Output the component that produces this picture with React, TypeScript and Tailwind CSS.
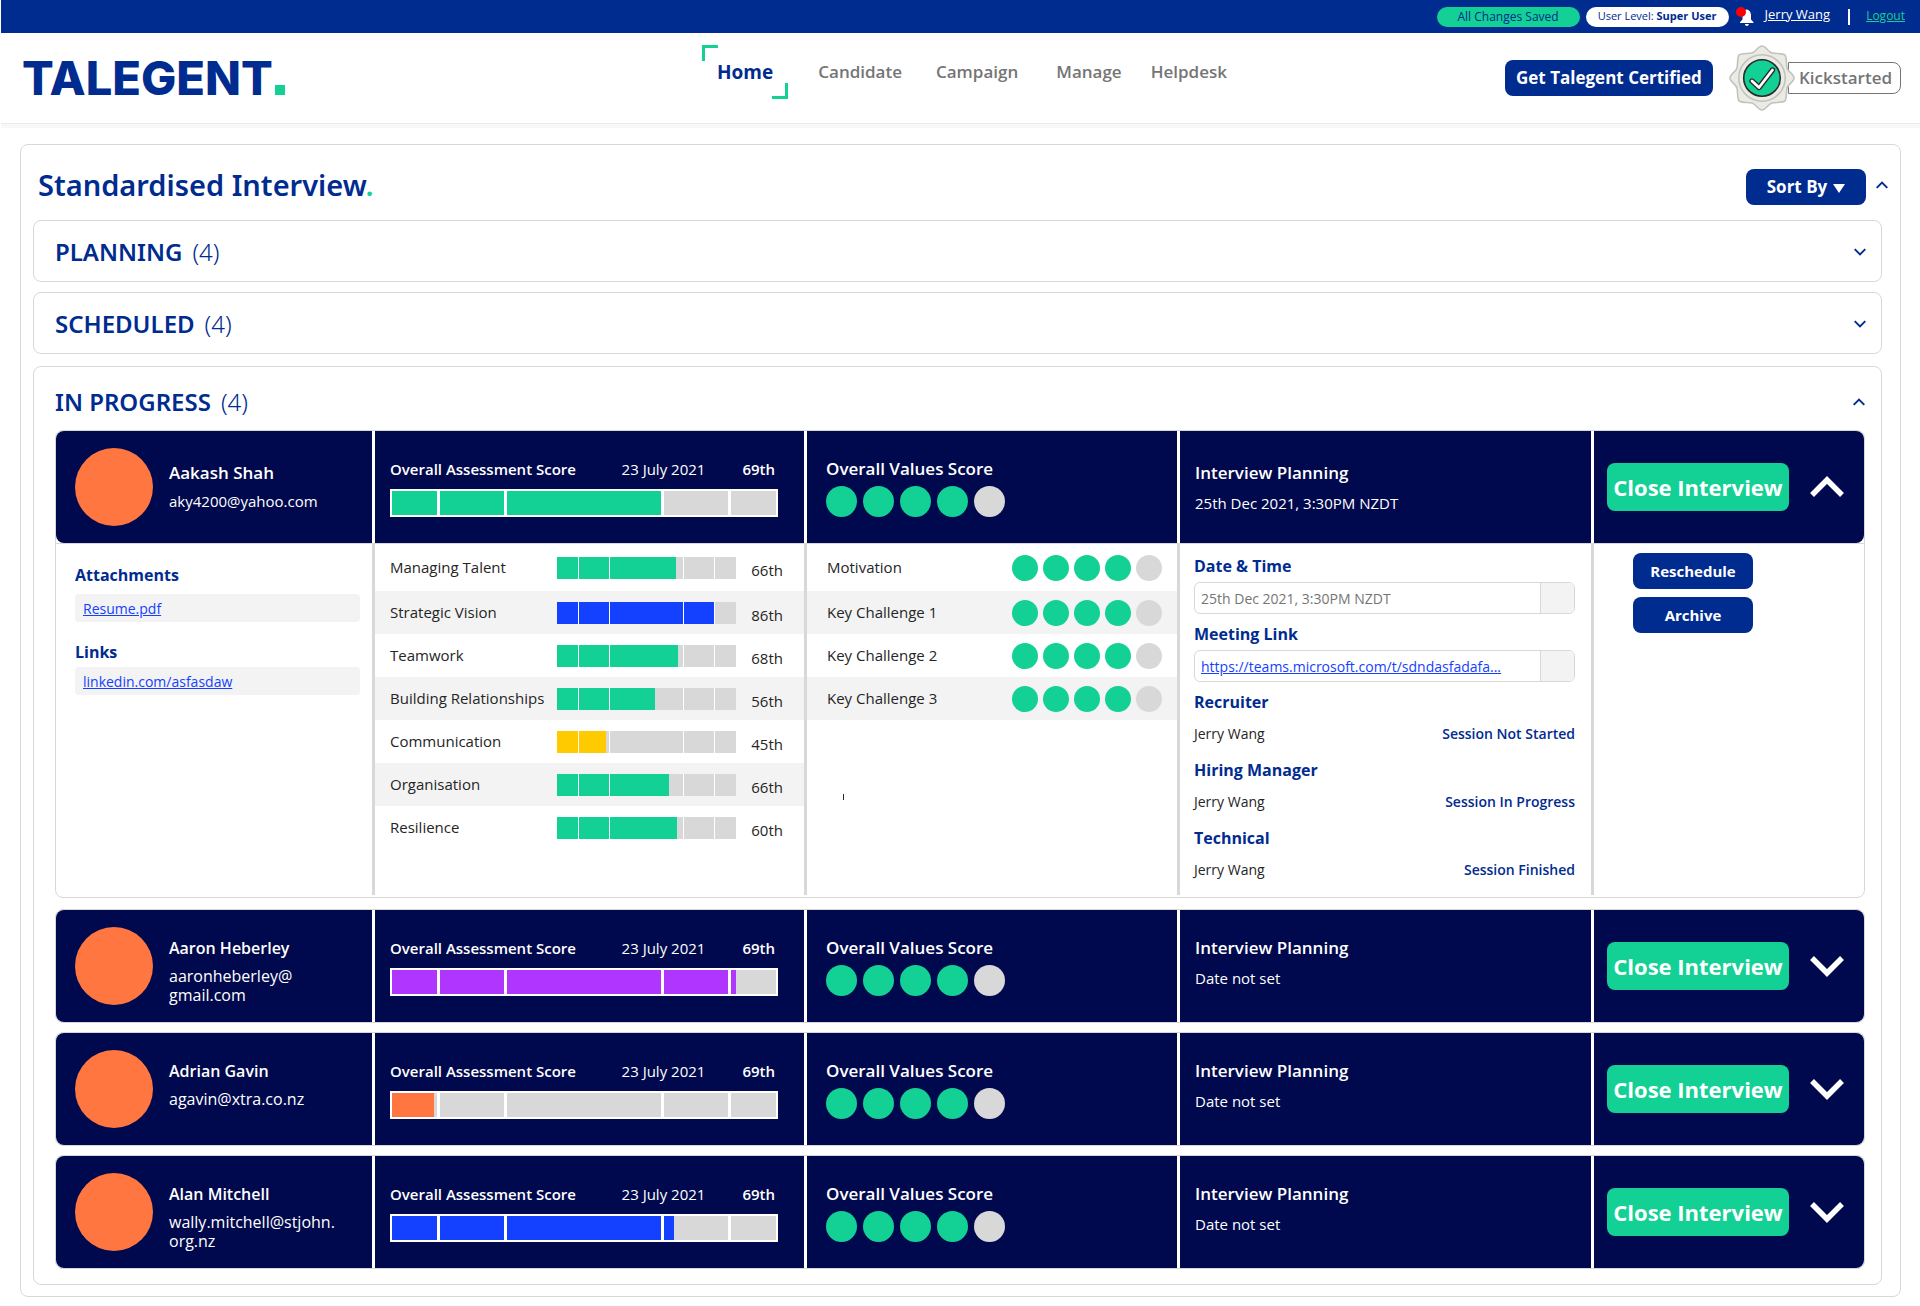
import { useState } from "react";
import clsx from "clsx";

type Fill = "green" | "blue" | "yellow" | "purple" | "orange";

const fillClass: Record<Fill, string> = {
  green: "bg-[#13d095]",
  blue: "bg-[#1341ff]",
  yellow: "bg-[#ffcb00]",
  purple: "bg-[#b036ff]",
  orange: "bg-[#ff7640]",
};

// Relative widths of the five score bands
const BANDS = [45, 65, 154, 65, 45];
const BAND_TOTAL = 374;

const COLUMNS = "grid grid-cols-[319fr_432fr_373fr_414fr_270fr]";

const candidates = [
  { name: "Aakash Shah", email: ["aky4200@yahoo.com"], fill: "green" as Fill, level: 70.6, planning: "25th Dec 2021, 3:30PM NZDT" },
  { name: "Aaron Heberley", email: ["aaronheberley@", "gmail.com"], fill: "purple" as Fill, level: 89.3, planning: "Date not set" },
  { name: "Adrian Gavin", email: ["agavin@xtra.co.nz"], fill: "orange" as Fill, level: 11.2, planning: "Date not set" },
  { name: "Alan Mitchell", email: ["wally.mitchell@stjohn.", "org.nz"], fill: "blue" as Fill, level: 73.4, planning: "Date not set" },
];

const competencies: { label: string; fill: Fill; level: number; rank: string }[] = [
  { label: "Managing Talent", fill: "green", level: 66.7, rank: "66th" },
  { label: "Strategic Vision", fill: "blue", level: 87.9, rank: "86th" },
  { label: "Teamwork", fill: "green", level: 67.8, rank: "68th" },
  { label: "Building Relationships", fill: "green", level: 55, rank: "56th" },
  { label: "Communication", fill: "yellow", level: 27.6, rank: "45th" },
  { label: "Organisation", fill: "green", level: 62.8, rank: "66th" },
  { label: "Resilience", fill: "green", level: 67.1, rank: "60th" },
];

const values = ["Motivation", "Key Challenge 1", "Key Challenge 2", "Key Challenge 3"];

const people = [
  { role: "Recruiter", name: "Jerry Wang", status: "Session Not Started" },
  { role: "Hiring Manager", name: "Jerry Wang", status: "Session In Progress" },
  { role: "Technical", name: "Jerry Wang", status: "Session Finished" },
];

const Chevron = ({ up = false, large = false }: { up?: boolean; large?: boolean }) => (
  <svg
    viewBox="0 0 34 22"
    className={clsx(large ? "w-[34px] h-[22px]" : "w-3 h-2", up && "rotate-180")}
    fill="none"
    stroke="currentColor"
    strokeWidth="5.5"
    aria-hidden="true"
  >
    <path d="M2 3 L17 18 L32 3" />
  </svg>
);

const ScoreBar = ({ fill, level, large = false }: { fill: Fill; level: number; large?: boolean }) => {
  const filled = (level / 100) * BAND_TOTAL;
  let start = 0;
  return (
    <div className={clsx("flex bg-white", large ? "h-7 gap-[3px] border-2 border-white" : "h-[22px] w-[179px] gap-px")}>
      {BANDS.map((band, i) => {
        const part = Math.min(Math.max((filled - start) / band, 0), 1);
        start += band;
        return (
          <div key={i} className="basis-0 bg-[#d8d8d8]" style={{ flexGrow: band }}>
            <div className={clsx("h-full", fillClass[fill])} style={{ width: `${Math.round(part * 100)}%` }} />
          </div>
        );
      })}
    </div>
  );
};

const Dots = ({ large = false }: { large?: boolean }) => (
  <div className={clsx("flex", large ? "gap-1.5" : "gap-[5px]")}>
    {[1, 2, 3, 4, 5].map((n) => (
      <span
        key={n}
        className={clsx("rounded-full", large ? "size-[31px]" : "size-[26px]", n < 5 ? "bg-[#13d095]" : "bg-[#d8d8d8]")}
      />
    ))}
  </div>
);

const Badge = () => (
  <svg viewBox="-33 -33 66 66" className="size-[66px]" aria-hidden="true">
    <path
      d="M0,-32 C4,-32 6,-26 10,-25 C14,-24 20,-25 23,-23 C25,-20 24,-14 25,-10 C26,-6 32,-4 32,0 C32,4 26,6 25,10 C24,14 25,20 23,23 C20,25 14,24 10,25 C6,26 4,32 0,32 C-4,32 -6,26 -10,25 C-14,24 -20,25 -23,23 C-25,20 -24,14 -25,10 C-26,6 -32,4 -32,0 C-32,-4 -26,-6 -25,-10 C-24,-14 -25,-20 -23,-23 C-20,-25 -14,-24 -10,-25 C-6,-26 -4,-32 0,-32Z"
      fill="#ebebe4"
      stroke="#c2c2c0"
      strokeWidth="1.6"
    />
    <circle r="23.2" fill="#ebebe4" stroke="#c2c2c0" strokeWidth="1.6" />
    <circle r="18.3" fill="#13d095" stroke="#2b2b2b" strokeWidth="1.6" />
    <path d="M-10 3 L-3 9.5 L10.5 -8" fill="none" stroke="#2b2b2b" strokeWidth="5.4" strokeLinecap="round" strokeLinejoin="round" />
    <path d="M-10 3 L-3 9.5 L10.5 -8" fill="none" stroke="#fff" strokeWidth="2.8" strokeLinecap="round" strokeLinejoin="round" />
  </svg>
);

const Bell = () => (
  <svg viewBox="0 0 18 19" className="w-[18px] h-[19px]" aria-hidden="true">
    <path
      d="M11 2.5 C13.5 3.2 15 5.4 15 8 V12.5 L17.5 15.2 V16 H4 V15.2 L6.5 12.5 V8 C6.5 5.4 8 3.2 10.2 2.5Z M9 17 H12.8 C12.8 18.2 12 19 10.9 19 C9.8 19 9 18.2 9 17Z"
      fill="#fff"
    />
    <circle cx="5" cy="5" r="5" fill="#f00" />
  </svg>
);

const TopBar = () => (
  <div className="flex h-[33px] items-center justify-end bg-[#002b8f] pr-[15px] text-[12px] text-[#002b8f]">
    <span className="flex h-5 w-[143px] items-center justify-center rounded-full bg-[#13d095]">All Changes Saved</span>
    <span className="ml-1.5 flex h-5 w-[143px] items-center justify-center rounded-full bg-white text-[11px]">
      <span>
        User Level: <b className="font-bold">Super User</b>
      </span>
    </span>
    <button type="button" aria-label="Notifications" className="ml-[7px] mr-[11px]">
      <Bell />
    </button>
    <a href="#profile" className="mb-1 text-[13px] text-white underline">
      Jerry Wang
    </a>
    <span className="ml-[18px] mr-4 h-4 w-0.5 bg-white" />
    <a href="#logout" className="mb-0.5 text-[#13d095] underline">
      Logout
    </a>
  </div>
);

const Header = () => (
  <header className="flex h-[91px] items-center border-b border-[#ebebeb] pl-[21px] pr-[19px]">
    <a href="#top" className="flex flex-1 items-end font-['Inter',sans-serif] text-[47px] leading-[34px] font-extrabold text-[#002b8f]">
      TALEGENT
      <span className="ml-0.5 size-2.5 bg-[#13d095]" />
    </a>
    <nav className="mb-3 ml-1.5 flex items-center text-[17px] font-semibold text-[#757575]">
      <a href="#home" className="relative px-[15px] py-[13px] text-[19px] leading-7 font-bold text-[#002b8f]">
        <span className="absolute left-0 top-0 size-4 border-l-3 border-t-3 border-[#13d095]" />
        Home
        <span className="absolute bottom-0 right-0 size-4 border-b-3 border-r-3 border-[#13d095]" />
      </a>
      <a href="#candidate" className="ml-[30px]">Candidate</a>
      <a href="#campaign" className="ml-[34px]">Campaign</a>
      <a href="#manage" className="ml-[38px]">Manage</a>
      <a href="#helpdesk" className="ml-[29px]">Helpdesk</a>
    </nav>
    <div className="flex flex-1 items-center justify-end">
      <button type="button" className="h-9 w-[208px] rounded-lg bg-[#002b8f] text-[17px] font-bold text-white">
        Get Talegent Certified
      </button>
      <div className="relative z-10 ml-4 -mr-[7px]">
        <Badge />
      </div>
      <span className="flex h-8 items-center rounded-r-lg border border-[#757575] pl-2.5 pr-2 text-[17px] font-semibold text-[#757575]">
        Kickstarted
      </span>
    </div>
  </header>
);

const SectionHeader = ({ title, open = false }: { title: string; open?: boolean }) => (
  <button
    type="button"
    aria-expanded={open}
    className="flex w-full items-center justify-between font-['Noto_Sans',sans-serif] text-[24px] leading-8 text-[#002b8f]"
  >
    <span>
      <span className="font-semibold">{title}</span>
      <span className="ml-2.5 font-light">(4)</span>
    </span>
    <Chevron up={open} />
  </button>
);

const FieldTitle = ({ children }: { children: string }) => (
  <h3 className="text-[16px] leading-[22px] font-bold text-[#002b8f]">{children}</h3>
);

const CandidateRow = ({ candidate, open, onToggle }: { candidate: (typeof candidates)[number]; open: boolean; onToggle: () => void }) => (
  <div className={clsx(COLUMNS, "h-28 rounded-lg bg-[#00094d] text-white")}>
    <div className="flex items-center gap-4 border-r-3 border-white pl-[19px]">
      <div className="size-[78px] shrink-0 rounded-full bg-[#ff7640]" />
      <div className={clsx("self-start", open ? "pt-[31px]" : "pt-[27px]")}>
        <p className={clsx("leading-[22px] font-semibold", open ? "text-[17px]" : "text-[16px]")}>{candidate.name}</p>
        <p className={clsx("mt-2 leading-[19px]", open ? "text-[15px]" : "text-[16px]")}>
          {candidate.email.map((part) => (
            <span key={part} className="block">{part}</span>
          ))}
        </p>
      </div>
    </div>
    <div className="border-r-3 border-white pl-[15px] pr-[26px] pt-[27px]">
      <div className="mb-[9px] flex text-[15px] leading-[22px] font-semibold">
        <span>Overall Assessment Score</span>
        <span className="ml-auto font-normal">23 July 2021</span>
        <span className="ml-[37px] mr-[3px]">69th</span>
      </div>
      <ScoreBar fill={candidate.fill} level={candidate.level} large />
    </div>
    <div className="border-r-3 border-white pl-[19px] pt-[27px]">
      <p className="mb-1.5 text-[17px] leading-[22px] font-semibold">Overall Values Score</p>
      <Dots large />
    </div>
    <div className={clsx("border-r-3 border-white pl-[15px]", open ? "pt-[31px]" : "pt-[27px]")}>
      <p className="text-[17px] leading-[22px] font-semibold">Interview Planning</p>
      <p className="mt-2 text-[15px] leading-[22px]">{candidate.planning}</p>
    </div>
    <div className="flex items-center pl-[13px]">
      <button type="button" className="h-12 w-[182px] rounded-lg bg-[#13d095] text-[22px] font-bold">
        Close Interview
      </button>
      <button type="button" aria-label={`Details of ${candidate.name}`} aria-expanded={open} onClick={onToggle} className="ml-[21px]">
        <Chevron up={open} large />
      </button>
    </div>
  </div>
);

const CandidateDetails = () => (
  <div className={clsx(COLUMNS, "min-h-[353px] border-t border-[#d8d8d8] pb-0.5")}>
    <div className="border-r-3 border-[#d8d8d8] pl-[19px] pr-3 pt-5">
      <FieldTitle>Attachments</FieldTitle>
      <div className="mt-2 flex h-7 items-center rounded bg-[#f3f3f3] px-2">
        <a href="#resume" className="text-[14px] text-[#1341ff] underline">Resume.pdf</a>
      </div>
      <div className="mt-[19px]">
        <FieldTitle>Links</FieldTitle>
      </div>
      <div className="mt-1 flex h-7 items-center rounded bg-[#f3f3f3] px-2">
        <a href="#linkedin" className="text-[14px] text-[#1341ff] underline">linkedin.com/asfasdaw</a>
      </div>
    </div>

    <div className="border-r-3 border-[#d8d8d8] text-[15px] text-[#252525]">
      {competencies.map((item, i) => (
        <div
          key={item.label}
          className={clsx("flex items-center pl-[15px] pr-[21px]", i === 0 ? "h-[47px]" : "h-[43px]", i % 2 === 1 && "bg-[#f3f3f3]")}
        >
          <span className="flex-1 whitespace-nowrap">{item.label}</span>
          <ScoreBar fill={item.fill} level={item.level} />
          <span className="w-[47px] pt-1.5 text-right">{item.rank}</span>
        </div>
      ))}
    </div>

    <div className="border-r-3 border-[#d8d8d8] text-[15px] text-[#252525]">
      {values.map((label, i) => (
        <div
          key={label}
          className={clsx("flex items-center justify-between pl-5 pr-[15px]", i === 0 ? "h-[47px]" : "h-[43px]", i % 2 === 1 && "bg-[#f3f3f3]")}
        >
          <span>{label}</span>
          <Dots />
        </div>
      ))}
      <div className="ml-9 mt-[74px] h-1.5 w-px bg-[#252525]" />
    </div>

    <div className="border-r-3 border-[#d8d8d8] pl-3.5 pr-4 pt-[11px]">
      <FieldTitle>Date &amp; Time</FieldTitle>
      <div className="mb-[9px] mt-[5px] flex h-8 overflow-hidden rounded-md border border-[#d8d8d8]">
        <input
          aria-label="Date & Time"
          defaultValue="25th Dec 2021, 3:30PM NZDT"
          className="min-w-0 flex-1 px-1.5 text-[14px] text-[#757575] outline-none"
        />
        <button type="button" aria-label="Pick a date" className="w-[34px] border-l border-[#d8d8d8] bg-[#f3f3f3]" />
      </div>
      <FieldTitle>Meeting Link</FieldTitle>
      <div className="mb-[9px] mt-[5px] flex h-8 items-stretch overflow-hidden rounded-md border border-[#d8d8d8]">
        <a href="#meeting" className="min-w-0 flex-1 self-center px-1.5 text-[14px] text-[#1341ff] underline">
          https://teams.microsoft.com/t/sdndasfadafa...
        </a>
        <button type="button" aria-label="Copy meeting link" className="w-[34px] border-l border-[#d8d8d8] bg-[#f3f3f3]" />
      </div>
      {people.map((person) => (
        <div key={person.role} className="h-[68px]">
          <FieldTitle>{person.role}</FieldTitle>
          <div className="mt-1 flex h-8 items-center justify-between text-[14px]">
            <span className="text-[#252525]">{person.name}</span>
            <span className="font-semibold text-[#002b8f]">{person.status}</span>
          </div>
        </div>
      ))}
    </div>

    <div className="flex flex-col gap-2 pl-[39px] pt-[9px]">
      <button type="button" className="h-9 w-[120px] rounded-lg bg-[#002b8f] text-[15px] font-bold text-white">Reschedule</button>
      <button type="button" className="h-9 w-[120px] rounded-lg bg-[#002b8f] text-[15px] font-bold text-white">Archive</button>
    </div>
  </div>
);

const App = () => {
  const [openName, setOpenName] = useState("Aakash Shah");

  return (
    <div className="min-h-screen bg-white pl-px font-['Open_Sans','Noto_Sans',sans-serif]">
      <TopBar />
      <Header />
      <div className="h-1 bg-[#f8f8f8]" />

      <main className="ml-[19px] mr-[19px] mt-4 rounded-lg border border-[#d8d8d8] pb-[11px] pl-3 pr-[18px]">
        <div className="flex h-[75px] items-center pl-[5px] pt-2">
          <h1 className="mb-1 flex-1 font-['Noto_Sans',sans-serif] text-[29px] font-semibold text-[#002b8f]">
            Standardised Interview<span className="text-[#13d095]">.</span>
          </h1>
          <button
            type="button"
            className="flex h-9 w-[120px] items-center justify-center gap-1.5 rounded-lg bg-[#002b8f] text-[17px] font-bold text-white"
          >
            Sort By
            <svg viewBox="0 0 12 9" className="mt-1 w-3" fill="currentColor" aria-hidden="true">
              <path d="M0 0 H12 L6 9Z" />
            </svg>
          </button>
          <button type="button" aria-label="Collapse" className="-mr-1.5 mb-1 ml-2.5 text-[#002b8f]">
            <Chevron up />
          </button>
        </div>

        <section className="flex h-[62px] items-center rounded-lg border border-[#d8d8d8] pl-[21px] pr-[15px] pt-0.5">
          <SectionHeader title="PLANNING" />
        </section>
        <section className="mt-2.5 flex h-[62px] items-center rounded-lg border border-[#d8d8d8] pl-[21px] pr-[15px] pt-0.5">
          <SectionHeader title="SCHEDULED" />
        </section>

        <section className="mt-3 rounded-lg border border-[#d8d8d8] pb-[15px] pl-[21px] pr-4">
          <div className="flex h-[63px] items-center pt-[7px]">
            <SectionHeader title="IN PROGRESS" open />
          </div>
          <div className="flex flex-col gap-[9px]">
            {candidates.map((candidate) => {
              const open = candidate.name === openName;
              return (
                <div key={candidate.name} className={clsx("rounded-lg border border-[#d8d8d8]", open && "mb-0.5")}>
                  <CandidateRow candidate={candidate} open={open} onToggle={() => setOpenName(open ? "" : candidate.name)} />
                  {open && <CandidateDetails />}
                </div>
              );
            })}
          </div>
        </section>
      </main>
    </div>
  );
};

export default App;
